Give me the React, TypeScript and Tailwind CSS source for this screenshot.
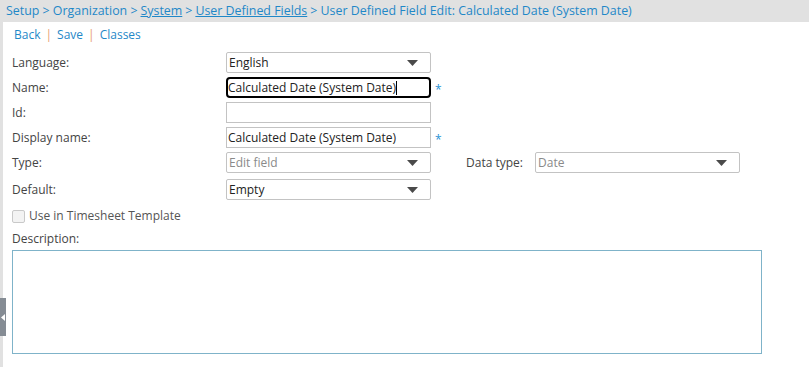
const font = { fontFamily: '"Open Sans", "Segoe UI", sans-serif' }

function Caret() {
  return (
    <svg width="11" height="6" viewBox="0 0 11 6" className="shrink-0">
      <path d="M0 0 H11 L5.5 6 Z" fill="#4a4a4a" />
    </svg>
  )
}

function Select({ value, muted }: { value: string; muted?: boolean }) {
  return (
    <div
      className={`w-[205px] h-[21px] border border-[#c3c3c3] rounded-[2px] bg-white flex items-center justify-between pl-[2px] pr-[12px] text-[12px] ${
        muted ? "text-[#8a8a8a]" : "text-[#222]"
      }`}
    >
      <span>{value}</span>
      <Caret />
    </div>
  )
}

function Star() {
  return <span className="ml-[4px] mt-[4px] text-[#2a93d5] text-[12px] leading-none">*</span>
}

export default function App() {
  return (
    <div className="w-[809px] h-[367px] bg-white overflow-hidden relative" style={font}>
      <div className="h-[22px] bg-[#e1e1e1] flex items-center pl-[6px] text-[12.4px] text-[#1f88c8] whitespace-nowrap">
        <span>Setup &gt; Organization &gt; </span>
        <span className="underline ml-[3px]">System</span>
        <span className="ml-[3px]">&gt;</span>
        <span className="underline ml-[3px]">User Defined Fields</span>
        <span className="ml-[3px]">&gt; User Defined Field Edit: Calculated Date (System Date)</span>
      </div>

      <div className="border-l-[3px] border-[#e1e1e1] h-[345px] pl-[9px] text-[12px] text-[#444]">
        <div className="flex items-center gap-[5px] h-[26px] pl-[2px] text-[#1f88c8] text-[12px]">
          <span>Back</span>
          <span className="text-[#e8a070]">|</span>
          <span>Save</span>
          <span className="text-[#e8a070]">|</span>
          <span>Classes</span>
        </div>

        <div className="flex flex-col gap-[4px] mt-[4px]">
          <div className="flex items-center">
            <span className="w-[214px]">Language:</span>
            <Select value="English" />
          </div>
          <div className="flex items-center">
            <span className="w-[214px]">Name:</span>
            <div className="w-[205px] h-[21px] border-2 border-black rounded-[4px] flex items-center text-[12px] text-[#222] whitespace-nowrap">
              <span>Calculated Date (System Date)</span>
              <span className="w-px h-[14px] bg-black" />
            </div>
            <Star />
          </div>
          <div className="flex items-center">
            <span className="w-[214px]">Id:</span>
            <div className="w-[205px] h-[21px] border border-[#c3c3c3]" />
          </div>
          <div className="flex items-center">
            <span className="w-[214px]">Display name:</span>
            <div className="w-[205px] h-[21px] border border-[#c3c3c3] flex items-center pl-[1px] text-[#222]">
              Calculated Date (System Date)
            </div>
            <Star />
          </div>
          <div className="flex items-center">
            <span className="w-[214px]">Type:</span>
            <Select value="Edit field" muted />
            <span className="ml-[35px] w-[69px]">Data type:</span>
            <Select value="Date" muted />
          </div>
          <div className="flex items-center mt-[2px]">
            <span className="w-[214px]">Default:</span>
            <Select value="Empty" />
          </div>
          <div className="flex items-center gap-[4px] mt-[3px]">
            <span className="w-[13px] h-[13px] border border-[#c9c9c9] rounded-[2px] bg-[#f3f3f3]" />
            <span className="text-[#555]">Use in Timesheet Template</span>
          </div>
          <div className="mt-[1px]">Description:</div>
          <div className="w-[750px] h-[104px] border border-[#7fb3c9] mt-[-2px]" />
        </div>
      </div>

      <div className="absolute left-0 top-[298px] w-[6px] h-[38px] bg-[#858c94] flex items-center justify-center">
        <svg width="4" height="7" viewBox="0 0 4 7">
          <path d="M4 0 V7 L0 3.5 Z" fill="#fff" />
        </svg>
      </div>
    </div>
  )
}
